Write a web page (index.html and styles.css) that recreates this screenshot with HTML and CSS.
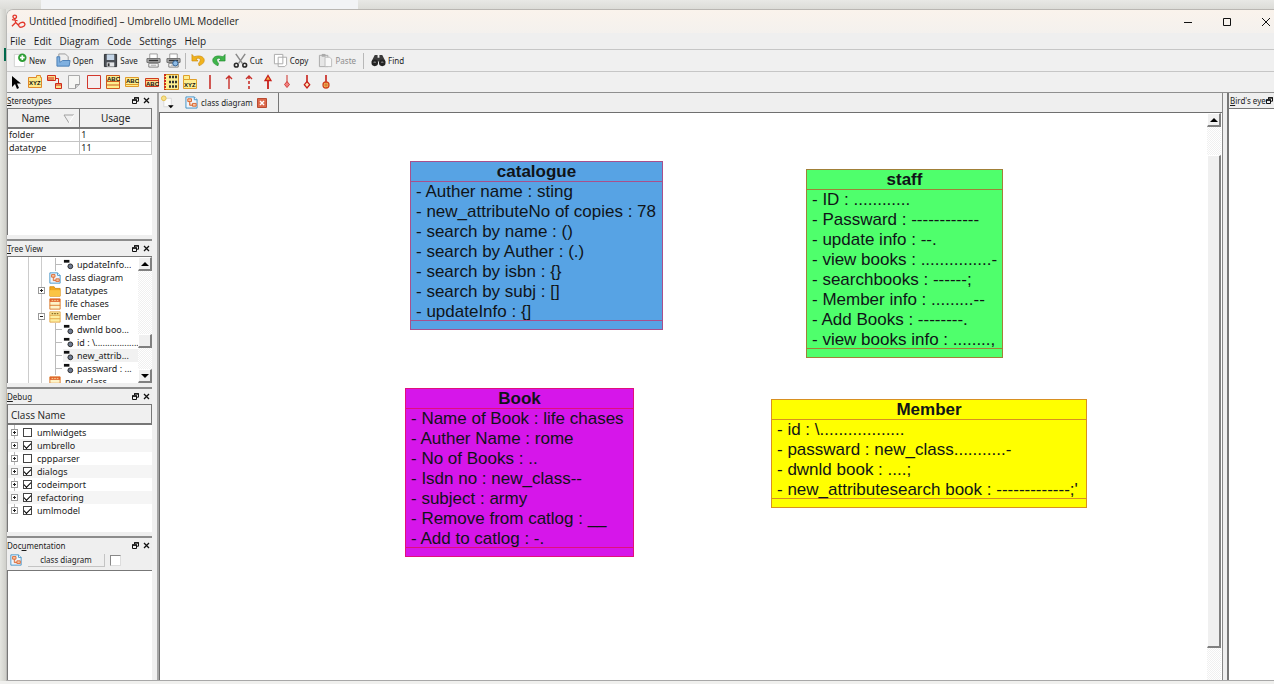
FILE: index.html
```
<!DOCTYPE html>
<html lang="en">
<head>
<meta charset="utf-8">
<title>Untitled [modified] – Umbrello UML Modeller</title>
<link rel="stylesheet" href="styles.css">
</head>
<body>
<svg class="defs" aria-hidden="true">
  <symbol id="i-diagram" viewBox="0 0 14 14"><path d="M1 1h9l3 3v9H1z" fill="#eef5fc" stroke="#3c8fc4"/><path d="M10 1v3h3" fill="#fff" stroke="#3c8fc4"/><path d="M3 3h4v3H3zM8 8h4v3H8zM5 6v4h3" fill="#f7c9a8" stroke="#d9622b"/></symbol>
  <symbol id="i-class" viewBox="0 0 14 14"><path d="M1 1h12v12H1z" fill="#fdf3c8" stroke="#d8701e"/><path d="M1 1h12v3.500H1z" fill="#e0622a"/><path d="M1 8.500h12" stroke="#d8701e"/><path d="M3 2.800h8" stroke="#fbe3a0" stroke-dasharray="2 1"/></symbol>
  <symbol id="i-class-open" viewBox="0 0 14 14"><path d="M1 1h12v12H1z" fill="#fdeea0" stroke="#e0a040"/><path d="M1 5h12M1 9h12" stroke="#e0a040"/><path d="M3 3h8" stroke="#8a6a20" stroke-width="1.500" stroke-dasharray="2 1"/></symbol>
  <symbol id="i-folder" viewBox="0 0 14 14"><path d="M1 2h5l1 2h6v9H1z" fill="#f3a81c" stroke="#d58a10"/><path d="M1 6h12v7H1z" fill="#fbc443"/></symbol>
  <symbol id="i-attr" viewBox="0 0 12 12"><path d="M1 1h6v3H1z" fill="#111"/><circle cx="8" cy="8" r="2.6" fill="#6f7b92" stroke="#222"/></symbol>
  <symbol id="i-float" viewBox="0 0 7 7"><path d="M2.5 2V.8h4v3.4H5M.5 3h4v3.5h-4z" fill="none" stroke="#111"/><path d="M2 .9h5M0 3h5" stroke="#111" stroke-width="1.4"/></symbol>
  <symbol id="i-close" viewBox="0 0 7 7"><path d="M1 1l5 5M6 1L1 6" stroke="#111" stroke-width="1.3"/></symbol>
  <symbol id="i-printer" viewBox="0 0 16 16"><path d="M4 1h8v5H4z" fill="#fff" stroke="#999"/><path d="M1 6h14v4H1z" fill="#b5b5b5" stroke="#666"/><path d="M3 8h10" stroke="#333" stroke-width="1.5"/><path d="M3 11h10v4H3z" fill="#fff" stroke="#777"/><path d="M5 13h6" stroke="#999"/></symbol>
</svg>

<div class="backdrop"><div class="backdrop-tab"></div></div>
<div class="desk">
<div class="window">
  <header class="titlebar">
    <svg class="app-icon" viewBox="0 0 16 16"><g fill="none" stroke="#e2362a" stroke-width="1.4"><circle cx="4" cy="3" r="1.9"/><path d="M4 5l1 4-4 4M5 9l3 3M1 6l6 1"/><ellipse cx="11.5" cy="11.5" rx="3.4" ry="2.4" transform="rotate(-20 11.5 11.5)"/></g></svg>
    <h1 class="title">Untitled [modified] – Umbrello UML Modeller</h1>
    <div class="caption">
      <button aria-label="Minimize"><svg viewBox="0 0 10 10"><path d="M1 5.5h8" stroke="#111"/></svg></button>
      <button aria-label="Maximize"><svg viewBox="0 0 10 10"><path d="M1.5 1.5h7v7h-7z" fill="none" stroke="#111"/></svg></button>
      <button aria-label="Close"><svg viewBox="0 0 10 10"><path d="M1 1l8 8M9 1L1 9" stroke="#111"/></svg></button>
    </div>
  </header>
  <nav class="menubar">
    <button>File</button><button>Edit</button><button>Diagram</button><button>Code</button><button>Settings</button><button>Help</button>
  </nav>
  <div class="toolbar" role="toolbar" aria-label="Main">
    <button><svg viewBox="0 0 16 16"><path d="M2.500 1.500h8l3 3v10h-11z" fill="#fff" stroke="#d0d0d0"/><circle cx="11" cy="5" r="4.500" fill="#2e9e35"/><path d="M11 2.500v5M8.500 5h5" stroke="#fff" stroke-width="1.800"/></svg>New</button>
    <button><svg viewBox="0 0 16 16"><path d="M3 7V1h7l3 3v6" fill="#eee" stroke="#999"/><path d="M1 4v10h13l1-6H7L4 10V4z" fill="#7fb0e0" stroke="#4a7eb5"/></svg>Open</button>
    <button><svg viewBox="0 0 16 16"><path d="M1.500 1.500h13v13h-13z" fill="#4d5157" stroke="#2c2f33"/><path d="M4 1.500h8v6H4z" fill="#c5d6e8"/><path d="M4 10h8v4.500H4z" fill="#e4e6e8"/><path d="M5 11h2v3H5z" fill="#333"/></svg>Save</button>
    <button class="only" aria-label="Print"><svg><use href="#i-printer"/></svg></button>
    <button class="only" aria-label="Print preview"><svg viewBox="0 0 16 16"><use href="#i-printer" width="16" height="16"/><circle cx="10" cy="11" r="2.800" fill="#8fbce6" stroke="#2d5d8f"/></svg></button>
    <span class="sep"></span>
    <button class="only" aria-label="Undo"><svg viewBox="0 0 16 16"><path d="M1 1.500v7h6.500L5.300 6.300C9 4 12 7 8 11l.5 2.500C18 11 15 0 3.300 4z" fill="#f1b31c" stroke="#c98a0c" stroke-width=".7"/></svg></button>
    <button class="only" aria-label="Redo"><svg viewBox="0 0 16 16"><path d="M15 1.500v7H8.500l2.200-2.200C7 4 4 7 8 11l-.5 2.500C-2 11 1 0 12.700 4z" fill="#3fb54a" stroke="#1f8a2c" stroke-width=".7"/></svg></button>
    <button><svg viewBox="0 0 16 16"><path d="M3 1l7 10M13 1L6 11" stroke="#8a8a8a" stroke-width="1.600"/><g fill="none" stroke="#2b2b2b" stroke-width="1.700"><circle cx="3.500" cy="13" r="2"/><circle cx="12.500" cy="13" r="2"/></g></svg>Cut</button>
    <button><svg viewBox="0 0 16 16"><path d="M1.500 1.500h9v10h-9zM5.500 4.500h9v8l-2 2h-7z" fill="#fff" stroke="#a9a9a9"/></svg>Copy</button>
    <button disabled><svg viewBox="0 0 16 16"><path d="M1.500 2.500h9v12h-9z" fill="#e6e6e6" stroke="#a9a9a9"/><path d="M4 1h4v3H4z" fill="#aaa"/><path d="M7.500 4.500h5l2 2v8h-7z" fill="#f8f8f8" stroke="#bbb"/></svg>Paste</button>
    <span class="sep"></span>
    <button><svg viewBox="0 0 16 16"><path d="M4 2h3v3h2V2h3l3.500 7H.5z" fill="#3b3b3b"/><circle cx="4" cy="10.500" r="3.500" fill="#222"/><circle cx="12" cy="10.500" r="3.500" fill="#222"/><path d="M2.500 10.500a1.500 1.500 0 0 1 3 0M10.500 10.500a1.500 1.500 0 0 1 3 0" fill="#888"/></svg>Find</button>
  </div>
  <div class="toolbar">
    <div class="tools" role="toolbar" aria-label="Diagram tools">
      <button aria-label="Select"><svg viewBox="0 0 16 16"><path d="M4 2v11l3-3 2 5 2-1-2-4.500h4z" fill="#000"/></svg></button>
      <button aria-label="Object"><svg viewBox="0 0 16 16"><path d="M1.500 3.500h8v-2h4v2h1v10h-13z" fill="#fde98a" stroke="#e0892a"/><text x="2" y="11">XYZ</text></svg></button>
      <button aria-label="Containment"><svg viewBox="0 0 16 16"><path d="M.5 1.500h8v5h-8zM8.500 9.500h6v5h-6z" fill="#fbe08a" stroke="#cf2b1e"/><path d="M8.500 4.500h3v5M8.500 11h6" fill="none" stroke="#cf2b1e"/><path d="M2 3v3M4 3v3M6 3v3" stroke="#cf2b1e"/></svg></button>
      <button aria-label="Note"><svg viewBox="0 0 16 16"><path d="M2.500 1.500h11v9l-4 4h-7z" fill="#f6f6f4" stroke="#aaa"/><path d="M9.500 14.500v-4h4" fill="#ccc" stroke="#999"/></svg></button>
      <button aria-label="Box"><svg viewBox="0 0 16 16"><path d="M1.500 1.500h13v13h-13z" fill="#f5eeee" stroke="#d2372c"/></svg></button>
      <button aria-label="Class"><svg viewBox="0 0 16 16"><path d="M1.500 1.500h13v13h-13zM1.500 7.500h13M1.500 11h13" fill="#fdee8f" stroke="#cf5a1e"/><text x="2" y="6.500">ABC</text></svg></button>
      <button aria-label="Interface"><svg viewBox="0 0 16 16"><path d="M1.500 3.500h13v9h-13zM1.500 10.500h13" fill="#fdee8f" stroke="#e09a2a"/><text x="2" y="9">ABC</text></svg></button>
      <button aria-label="Datatype"><svg viewBox="0 0 16 16"><path d="M1.500 4.500h13v8h-13zM1.500 6.500h13" fill="#fbd98f" stroke="#cf3a1e"/><text x="2" y="12">ABC</text></svg></button>
      <button aria-label="Enum"><svg viewBox="0 0 16 16"><path d="M1.500 .5h14v15h-14z" fill="#fdee8f" stroke="#cf8a1e"/><path d="M2 0v16" stroke="#cf2b1e" stroke-dasharray="2 1" stroke-width="2"/><path d="M6 3h8M6 8h8M6 12.500h8" stroke="#333" stroke-dasharray="2 1" stroke-width="2.500"/></svg></button>
      <button aria-label="Package"><svg viewBox="0 0 16 16"><path d="M1.500 5.500v-4h6v4h7v9h-13z" fill="#fdee8f" stroke="#e0a02a"/><path d="M1.500 5.500h6" stroke="#e0a02a"/><text x="2" y="13">XYZ</text></svg></button>
      <button aria-label="Association"><svg viewBox="0 0 16 16"><path d="M8 1v14" stroke="#c8302a" stroke-width="1.600"/></svg></button>
      <button aria-label="Directed association"><svg viewBox="0 0 16 16"><path d="M8 2v13M5 5l3-3 3 3" fill="none" stroke="#c8302a" stroke-width="1.400"/></svg></button>
      <button aria-label="Dependency"><svg viewBox="0 0 16 16"><path d="M8 2v13" stroke="#c8302a" stroke-width="1.600" stroke-dasharray="3 2"/><path d="M5 5l3-3 3 3" fill="none" stroke="#c8302a" stroke-width="1.400"/></svg></button>
      <button aria-label="Generalization"><svg viewBox="0 0 16 16"><path d="M8 6v9" stroke="#c8201a" stroke-width="1.800"/><path d="M5 6.500l3-5 3 5z" fill="#f7b54a" stroke="#c8201a" stroke-width="1.300"/></svg></button>
      <button aria-label="Composition"><svg viewBox="0 0 16 16"><path d="M8 1v8" stroke="#d4504a" stroke-width="1.200"/><path d="M8 7.500l2.500 3L8 13.500l-2.500-3z" fill="#f08080" stroke="#d4403a"/></svg></button>
      <button aria-label="Aggregation"><svg viewBox="0 0 16 16"><path d="M8 1v7" stroke="#c8201a" stroke-width="1.600"/><path d="M8 7.500l2.700 3.200L8 14l-2.700-3.300z" fill="#fdeac0" stroke="#c8201a" stroke-width="1.300"/></svg></button>
      <button aria-label="Contains"><svg viewBox="0 0 16 16"><path d="M8 1v7" stroke="#c8201a" stroke-width="1.600"/><circle cx="8" cy="11" r="3" fill="#f9c56a" stroke="#d0401a" stroke-width="1.300"/><path d="M8 9v4M6 11h4" stroke="#c8601a" stroke-width=".8"/></svg></button>
    </div>
  </div>

  <div class="workspace">
    <aside class="docks">
      <section class="dock dock-stereo">
        <header class="dock-head"><h2><u>S</u>tereotypes</h2><button aria-label="Float"><svg><use href="#i-float"/></svg></button><button aria-label="Close"><svg><use href="#i-close"/></svg></button></header>
        <div class="dock-body">
          <table class="stereo">
            <thead><tr><th>Name<svg class="sort" viewBox="0 0 12 10"><path d="M11 1H1l5 8" fill="none" stroke="#a0a0a0"/><path d="M6 9l5-8" stroke="#fff"/></svg></th><th>Usage</th></tr></thead>
            <tbody><tr><td>folder</td><td>1</td></tr><tr><td>datatype</td><td>11</td></tr></tbody>
          </table>
        </div>
      </section>
      <section class="dock dock-tree">
        <header class="dock-head"><h2><u>T</u>ree View</h2><button aria-label="Float"><svg><use href="#i-float"/></svg></button><button aria-label="Close"><svg><use href="#i-close"/></svg></button></header>
        <div class="dock-body tree-body">
          <ul class="tree">
            <li class="leaf"><svg><use href="#i-attr"/></svg><span>updateInfo...</span></li>
            <li><i></i><svg><use href="#i-diagram"/></svg><span>class diagram</span></li>
            <li><i class="box plus"></i><svg><use href="#i-folder"/></svg><span>Datatypes</span></li>
            <li><i></i><svg><use href="#i-class"/></svg><span>life chases</span></li>
            <li><i class="box"></i><svg><use href="#i-class-open"/></svg><span>Member</span></li>
            <li class="leaf"><svg><use href="#i-attr"/></svg><span>dwnld boo...</span></li>
            <li class="leaf"><svg><use href="#i-attr"/></svg><span>id : \..................</span></li>
            <li class="leaf hover"><svg><use href="#i-attr"/></svg><span>new_attrib...</span></li>
            <li class="leaf"><svg><use href="#i-attr"/></svg><span>passward : ...</span></li>
            <li><i></i><svg><use href="#i-class"/></svg><span>new_class</span></li>
          </ul>
          <div class="scroll"><button class="up" aria-label="Scroll up"></button><span class="track track-long"></span><span class="thumb"></span><span class="track"></span><button class="down" aria-label="Scroll down"></button></div>
        </div>
      </section>
      <section class="dock dock-debug">
        <header class="dock-head"><h2><u>D</u>ebug</h2><button aria-label="Float"><svg><use href="#i-float"/></svg></button><button aria-label="Close"><svg><use href="#i-close"/></svg></button></header>
        <div class="dock-body">
          <div class="col-head">Class Name</div>
          <ul class="checks">
            <li><i class="box plus"></i><label><input type="checkbox">umlwidgets</label></li>
            <li><i class="box plus"></i><label><input type="checkbox" checked>umbrello</label></li>
            <li><i class="box plus"></i><label><input type="checkbox">cppparser</label></li>
            <li><i class="box plus"></i><label><input type="checkbox" checked>dialogs</label></li>
            <li><i class="box plus"></i><label><input type="checkbox" checked>codeimport</label></li>
            <li><i class="box plus"></i><label><input type="checkbox" checked>refactoring</label></li>
            <li><i class="box plus"></i><label><input type="checkbox" checked>umlmodel</label></li>
          </ul>
        </div>
      </section>
      <section class="dock dock-doc">
        <header class="dock-head"><h2>Doc<u>u</u>mentation</h2><button aria-label="Float"><svg><use href="#i-float"/></svg></button><button aria-label="Close"><svg><use href="#i-close"/></svg></button></header>
        <div class="doc-bar"><svg><use href="#i-diagram"/></svg><span class="doc-name">class diagram</span><input type="checkbox" aria-label="Modified"></div>
        <textarea class="doc-text" aria-label="Documentation"></textarea>
      </section>
    </aside>

    <main class="center">
      <div class="tabs">
        <button class="new-tab" aria-label="New diagram"><svg viewBox="0 0 16 16"><path d="M3.500 3.500h8v9h-8z" fill="#fbfbfb" stroke="#d8d8d8"/><circle cx="3.500" cy="3.500" r="2.500" fill="#f6e08a" stroke="#e2bd4a"/><path d="M8 11h6l-3 3z" fill="#000"/></svg></button>
        <div class="tab"><svg><use href="#i-diagram"/></svg>class diagram<button class="tab-close" aria-label="Close tab"><svg viewBox="0 0 10 10"><path d="M.5.5h9v9h-9z" fill="#dc6a4c" stroke="#b94a30"/><path d="M3 3l4 4M7 3L3 7" stroke="#fff" stroke-width="1.500"/></svg></button></div>
      </div>
      <div class="view">
        <div class="canvas">
          <article class="uml catalogue"><h3>catalogue</h3>
            <ul><li>- Auther name : sting</li><li>- new_attributeNo of copies : 78</li><li>- search by name : ()</li><li>- search by Auther : (.)</li><li>- search by isbn : {}</li><li>- search by subj : []</li><li>- updateInfo : {]</li></ul></article>
          <article class="uml staff"><h3>staff</h3>
            <ul><li>- ID : ............</li><li>- Passward : ------------</li><li>- update info : --.</li><li>- view books : ...............-</li><li>- searchbooks : ------;</li><li>- Member info : .........--</li><li>- Add Books : --------.</li><li>- view books info : ........,</li></ul></article>
          <article class="uml book"><h3>Book</h3>
            <ul><li>- Name of Book : life chases</li><li>- Auther Name : rome</li><li>- No of Books : ..</li><li>- Isdn no : new_class--</li><li>- subject : army</li><li>- Remove from catlog : __</li><li>- Add to catlog : -.</li></ul></article>
          <article class="uml member"><h3>Member</h3>
            <ul><li>- id : \..................</li><li>- passward : new_class...........-</li><li>- dwnld book : ....;</li><li>- new_attributesearch book : -------------;'</li></ul></article>
        </div>
        <div class="scroll"><button class="up" aria-label="Scroll up"></button><span class="track gap"></span><span class="thumb thumb-long"></span><span class="track gap-end"></span></div>
      </div>
    </main>

    <aside class="birds">
      <header class="dock-head"><h2><u>B</u>ird's eye</h2><button aria-label="Float"><svg><use href="#i-float"/></svg></button></header>
      <div class="birds-body"></div>
    </aside>
  </div>
</div>
</div>
</body>
</html>
```
FILE: styles.css
```
* { box-sizing: border-box; }
html, body { height: 100%; }
body {
  margin: 0;
  display: flex;
  flex-direction: column;
  overflow: hidden;
  background: #dfe0dc;
  color: #1c1c1c;
  font: 9px/13px "Noto Sans", "Open Sans", sans-serif;
}
h1, h2, h3, ul { margin: 0; padding: 0; font: inherit; list-style: none; }
button { margin: 0; padding: 0; border: 0; background: none; color: inherit; font: inherit; }
svg { display: block; flex: none; }
.defs { position: absolute; width: 0; height: 0; }

.backdrop { height: 9px; padding-left: 41px; background: linear-gradient(#e8e8e5, #dcdcd8); }
.backdrop-tab { width: 317px; height: 100%; background: #f2f3f5; }
.desk { flex: 1; min-height: 0; display: flex; padding: 0 0 3px 6px; background: linear-gradient(#f0f0ee, #f0f0ee) bottom / 100% 3px no-repeat, linear-gradient(#00694c, #00694c) 4px 39px / 2px 13px no-repeat, linear-gradient(90deg, #e4e5e0, #cfcfca) left / 6px 100% no-repeat; }
.window { flex: 1; min-width: 0; display: flex; flex-direction: column; background: #efefef; border-top: 1px solid #b9b6b2; border-left: 1px solid #b9b9b6; border-bottom: 1px solid #a8a8a8; border-top-left-radius: 7px; }

.titlebar { display: flex; align-items: center; height: 23px; padding-left: 4px; background: linear-gradient(#faf3ec, #f4f1ee); border-top-left-radius: 6px; }
.app-icon { width: 15px; height: 15px; margin-right: 3px; }
.title { font-family: "Open Sans", "Noto Sans", sans-serif; font-size: 10px; }
.caption { margin-left: auto; display: flex; gap: 29px; padding-right: 3px; }
.caption svg { width: 10px; height: 10px; }
.menubar { display: flex; gap: 8px; height: 17px; padding-left: 3px; font: 10px/16px "Open Sans", "Noto Sans", sans-serif; border-bottom: 1px solid #c6c6c6; }
.toolbar { display: flex; align-items: center; height: 22px; font-size: 8px; border-bottom: 1px solid #c6c6c6; background: #f0f0f0; }
.toolbar + .toolbar { height: 21px; padding-left: 1px; border-bottom-color: #8f8f8f; }
.toolbar button { display: flex; align-items: center; gap: 2px; padding: 0 5px; }
.toolbar button.only { padding: 0 2px 0 3px; }
.toolbar button:disabled { color: #8d8d8d; }
.toolbar svg { width: 15px; height: 15px; }
.sep { width: 1px; height: 16px; margin: 0 2px; background: #b8b8b8; }
.tools { display: flex; justify-content: space-between; width: 326px; }
.tools button { padding: 0; }
.tools svg { width: 16px; height: 16px; }
.tools text { font: bold 6px "Liberation Sans", sans-serif; fill: #111; }

.workspace { flex: 1; min-height: 0; display: flex; }
.docks { flex: none; width: 150px; display: flex; flex-direction: column; border-right: 5px solid #f0f0f0; }
.dock { display: flex; flex-direction: column; min-height: 0; padding-bottom: 4px; border-bottom: 2px solid #8c8c8c; }
.dock-stereo { height: 148px; }
.dock-tree { height: 148px; }
.dock-debug { height: 149px; }
.dock-doc { flex: 1; padding: 0; border: 0; }
.dock-head { flex: none; display: flex; align-items: center; gap: 4px; height: 15px; padding-right: 2px; }
.dock-head h2 { flex: 1; min-width: 0; overflow: hidden; white-space: nowrap; font-size: 8px; }
.dock-head svg { width: 7px; height: 7px; }
.dock-body { flex: 1; min-height: 0; overflow: hidden; background: #fff; border: solid #777; border-width: 1px 0 0 1px; }

.stereo { width: 100%; table-layout: fixed; border-collapse: collapse; }
.stereo th { height: 19px; padding: 0; background: #f0f0f0; border-right: 1px solid #777; border-bottom: 2px solid #777; font-weight: normal; font-size: 10px; }
.stereo th:first-child { padding-right: 15px; }
.sort { float: right; width: 12px; height: 10px; margin: 2px -11px -10px 0; }
.stereo td { height: 13px; padding: 0 2px 0 1px; line-height: 12px; border-right: 1px solid #c4c4c4; border-bottom: 1px solid #c4c4c4; }

.tree-body { display: flex; }
.tree { flex: 1; min-width: 0; padding-top: 1px; background: linear-gradient(90deg, #ccc, #ccc) 20px 0 / 1px 100% no-repeat, linear-gradient(90deg, #ccc, #ccc) 33px 0 / 1px 100% no-repeat; }
.tree li { display: flex; align-items: center; height: 13px; padding-left: 30px; gap: 4px; white-space: nowrap; }
.tree li.leaf { padding-left: 47px; gap: 3px; background: linear-gradient(#bbb, #bbb) 47px 6px / 7px 1px no-repeat, linear-gradient(#bbb, #bbb) 47px 0 / 1px 100% no-repeat; }
.tree li.leaf svg { margin-left: 8px; width: 11px; height: 11px; }
.tree svg { width: 12px; height: 12px; }
.tree li.leaf.hover { background-image: linear-gradient(#bbb, #bbb), linear-gradient(#bbb, #bbb), linear-gradient(#f1f1f1, #f1f1f1); background-position: 47px 6px, 47px 0, 55px 0; background-size: 7px 1px, 1px 100%, 100% 100%; background-repeat: no-repeat; }
.tree i { width: 7px; height: 7px; }
.tree svg + span { min-width: 0; overflow: hidden; }
.box { flex: none; width: 7px; height: 7px; border: 1px solid #999; background: linear-gradient(#222, #222) center / 3px 1px no-repeat, #fff; }
.box.plus { background: linear-gradient(#222, #222) center / 3px 1px no-repeat, linear-gradient(#222, #222) center / 1px 3px no-repeat, #fff; }

.scroll { flex: none; width: 14px; display: flex; flex-direction: column; background: repeating-conic-gradient(#fff 0 25%, #f0f0f0 0 50%) 0 0 / 2px 2px; }
.scroll button, .thumb { flex: none; height: 14px; background: #f0f0f0; border: solid; border-width: 1px 2px 2px 1px; border-color: #fff #808080 #808080 #fff; }
.scroll button { display: grid; place-items: center; }
.scroll button::before { content: ""; border: 4px solid transparent; border-top: 0; border-bottom-color: #000; }
.scroll .down::before { border-top: 4px solid #000; border-bottom: 0; }
.track { flex: 22; }
.track-long { flex: 64; }

.col-head { height: 20px; padding-left: 3px; font: 10px/20px "Open Sans", "Noto Sans", sans-serif; background: #f0f0f0; border-right: 1px solid #777; border-bottom: 2px solid #777; }
.checks { padding-top: 1px; background: linear-gradient(#bbb, #bbb) 6px 0 / 1px 88px no-repeat; }
.checks li { display: flex; align-items: center; gap: 5px; height: 13px; padding-left: 3px; }
.checks li:nth-child(even) { background: #f5f5f5; }
.checks label { display: flex; align-items: center; gap: 5px; }
input[type="checkbox"] { appearance: none; flex: none; width: 9px; height: 9px; margin: 0; border: 1px solid #444; background: #fff; display: grid; place-items: center; }
input[type="checkbox"]:checked::before { content: ""; width: 6px; height: 3px; margin-bottom: 2px; border: solid #000; border-width: 0 0 1px 1px; transform: rotate(-45deg); }

.doc-bar { flex: none; display: flex; align-items: center; gap: 5px; height: 14px; margin-bottom: 3px; padding-left: 3px; font-size: 8px; }
.doc-bar svg { width: 12px; height: 12px; }
.doc-name { width: 77px; margin-left: 1px; text-align: center; line-height: 12px; border: solid #c4c4c4; border-width: 0 1px 1px 0; }
.doc-bar input { width: 11px; height: 11px; border-color: #888 #ddd #ddd #888; }
.doc-text { flex: 1; width: 100%; resize: none; border: solid #777; border-width: 1px 0 0 1px; background: #fff; outline: 0; }

.center { flex: 1; min-width: 0; display: flex; flex-direction: column; border-left: 2px solid #a6a6a6; border-right: 1px solid #888; }
.tabs { flex: none; display: flex; height: 19px; }
.new-tab { padding: 0 7px 0 1px; }
.new-tab svg { width: 16px; height: 15px; }
.tab { display: flex; align-items: center; gap: 3px; padding: 0 11px 0 2px; font-size: 8px; border-right: 1px solid #777; }
.tab > svg { width: 13px; height: 13px; }
.tab-close { padding-left: 1px; }
.tab-close svg { width: 10px; height: 10px; }
.view { flex: 1; min-height: 0; display: flex; border: solid #6f6f6f; border-width: 1px 0 0 1px; background: #fff; padding-right: 1px; }
.canvas { flex: 1; min-width: 0; position: relative; }
.track.gap { flex: 28; }
.track.gap-end { flex: 32; }
.thumb-long { flex: 494; }

.uml { position: absolute; border: 1px solid; background: var(--fill); border-color: var(--line); padding-bottom: 8px; color: #101418; font: 17px/20px "Liberation Sans", Arial, sans-serif; white-space: nowrap; }
.uml h3 { height: 20px; font-weight: bold; text-align: center; border-bottom: 1px solid var(--line); }
.uml ul { padding: 0 5px; border-bottom: 1px solid var(--line); }
.uml li { height: 20px; }
.uml li:last-child { height: 18px; }
.catalogue { --fill: #57a3e4; --line: #a8508c; left: 250px; top: 48px; width: 253px; }
.staff { --fill: #4fff6c; --line: #a08038; left: 646px; top: 56px; width: 197px; }
.book { --fill: #d616ea; --line: #e0107c; left: 245px; top: 275px; width: 229px; }
.member { --fill: #ffff00; --line: #d89020; left: 611px; top: 286px; width: 316px; }

.birds { flex: none; width: 51px; display: flex; flex-direction: column; padding-left: 4px; }
.birds .dock-head { height: 15px; gap: 0; padding: 0 1px 0 1px; border-left: 2px solid #777; }
.birds-body { flex: 1; background: #fff; border: solid #777; border-width: 1px 0 0 2px; }
```
